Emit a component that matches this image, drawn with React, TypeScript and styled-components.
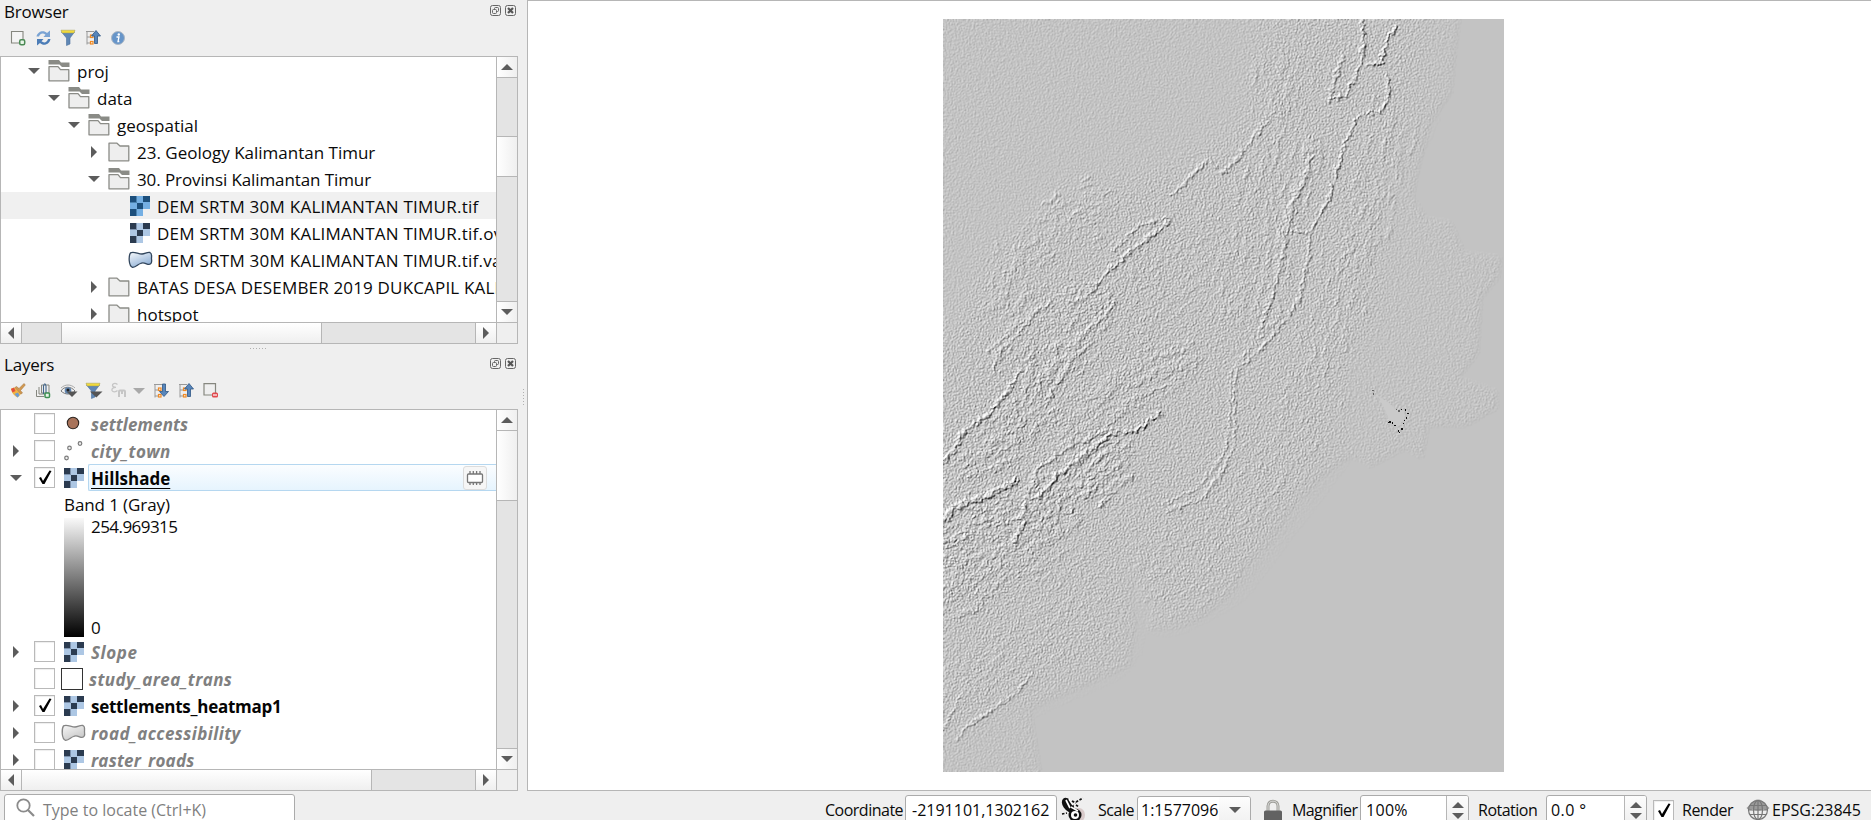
import React from "react";
import styled, { createGlobalStyle, css } from "styled-components";

const Global = createGlobalStyle`
  * { box-sizing: border-box; }
  html, body { margin: 0; padding: 0; overflow: hidden; }
  body { background: #efefef; color: #0a0a0a; font-family: "Open Sans", "Noto Sans", sans-serif; font-size: 17px; }
  svg { display: block; flex: none; }
`;

/* ---------- layout ---------- */
const Shell = styled.div`
  width: 1871px; height: 820px; display: flex; flex-direction: column;
  background: #efefef; overflow: hidden;
`;
const Main = styled.div`display: flex; height: 791px; flex: none;`;
const Docks = styled.div`width: 518px; display: flex; flex-direction: column; flex: none;`;
const VHandle = styled.div`
  width: 9px; flex: none; display: flex; align-items: flex-start; justify-content: center; padding: 389px 0 0 2px;
`;
const HHandle = styled.div`height: 9px; flex: none; display: flex; justify-content: center; padding-top: 4px;`;
const Dots = styled.div<{ $vertical?: boolean }>`
  ${(p) => p.$vertical
    ? css`width: 1px; height: 17px; background: repeating-linear-gradient(#b0b0b0 0 1px, transparent 1px 3px);`
    : css`width: 18px; height: 1px; background: repeating-linear-gradient(90deg, #b0b0b0 0 1px, transparent 1px 3px);`}
`;
const MapPanel = styled.div`
  flex: 1; background: #fff; border: 1px solid #b6b6b6; border-right: 0; padding: 18px 0 0 415px;
`;

const Text = styled.span<{ $ls?: number }>`
  white-space: pre; flex: none;
  letter-spacing: ${(p) => p.$ls ?? 0}px;
`;

const Dock = styled.section<{ $h: number }>`height: ${(p) => p.$h}px; display: flex; flex-direction: column; flex: none;`;
const TitleBar = styled.header<{ $h: number }>`
  height: ${(p) => p.$h}px; padding: 0 2px 0 4px; display: flex; align-items: center; justify-content: space-between; flex: none;
`;
const TitleButtons = styled.div`display: flex; gap: 4px; margin-top: -3px;`;
const Toolbar = styled.div<{ $h: number; $pb: number }>`
  height: ${(p) => p.$h}px; display: flex; align-items: center; padding: 0 0 ${(p) => p.$pb}px 10px; flex: none;
`;
const Tool = styled.div<{ $w?: number }>`width: ${(p) => p.$w ?? 25}px; height: 18px; flex: none;`;

const Frame = styled.div`
  flex: 1; min-height: 0; border: 1px solid #b6b6b6; background: #fff;
  display: grid; grid-template-columns: 495px 21px; grid-template-rows: 1fr 21px;
`;
const Tree = styled.div`overflow: hidden; min-height: 0;`;
const Corner = styled.div`background: #efefef; border-left: 1px solid #b6b6b6; border-top: 1px solid #b6b6b6;`;
const Bar = styled.div<{ $v?: boolean }>`
  display: flex; background: #e4e4e4; overflow: hidden;
  ${(p) => (p.$v ? css`flex-direction: column; border-left: 1px solid #b6b6b6;` : css`border-top: 1px solid #b6b6b6;`)}
`;
const Piece = styled.div<{ $v?: boolean; $len: number; $edge?: "start" | "end" | "both" }>`
  flex: none; display: flex; align-items: center; justify-content: center;
  background: linear-gradient(${(p) => (p.$v ? "90deg" : "180deg")}, #ffffff, #efefef);
  ${(p) => (p.$v ? css`height: ${p.$len}px;` : css`width: ${p.$len}px;`)}
  ${(p) => (p.$edge === "start" || p.$edge === "both") && (p.$v ? "border-top: 1px solid #b6b6b6;" : "border-left: 1px solid #b6b6b6;")}
  ${(p) => (p.$edge === "end" || p.$edge === "both") && (p.$v ? "border-bottom: 1px solid #b6b6b6;" : "border-right: 1px solid #b6b6b6;")}
`;
const Gap = styled.div<{ $len?: number }>`flex: ${(p) => (p.$len ? `0 0 ${p.$len}px` : "1 1 0")};`;

const Row = styled.div<{ $level: number; $selected?: boolean }>`
  height: 27px; display: flex; align-items: center; white-space: nowrap;
  padding-left: ${(p) => 27 + p.$level * 20}px;
  background: ${(p) => (p.$selected ? "#f0f0f0" : "transparent")};
  ${Text} { margin-top: 2px; }
`;
const ArrowSlot = styled.div`width: 20px; flex: none; display: flex;`;
const IconSlot = styled.div`width: 29px; flex: none; display: flex;`;
const RasterSlot = styled.div`padding-left: 2px;`;

const LayerRow = styled.div`height: 27px; display: flex; align-items: center; white-space: nowrap; padding-left: 9px;`;
const LayerArrow = styled.div`width: 24px; flex: none; display: flex;`;
const Check = styled.div`
  width: 21px; height: 21px; flex: none; background: #fff; border: 1px solid #b9b9b9;
  box-shadow: inset 1px 1px 1px #eee; display: flex; align-items: center; justify-content: center;
`;
const Symbol = styled.div<{ $w: number; $pl: number }>`width: ${(p) => p.$w}px; padding-left: ${(p) => p.$pl}px; flex: none; display: flex;`;
const Name = styled.div<{ $kind: "off" | "on" | "current" }>`
  flex: 1; height: 27px; display: flex; justify-content: space-between; align-items: center;
  padding-left: 2px; font-weight: 700; border: 1px solid transparent; border-right: 0;
  color: ${(p) => (p.$kind === "off" ? "#808080" : "#050505")};
  font-style: ${(p) => (p.$kind === "off" ? "italic" : "normal")};
  ${Text} { margin-top: 2px; }
  ${(p) => p.$kind === "current" && css`
    border-color: #b5d7f0; border-radius: 2px 0 0 2px; background: linear-gradient(#fbfdff, #e6f4fe);
    ${Text} { text-decoration: underline; text-decoration-thickness: 1px; text-underline-offset: 3px; }
  `}
`;
const MemoryChip = styled.div`
  width: 24px; height: 24px; margin-right: 9px; border: 1px solid #dcdcdc; border-radius: 3px; background: #f6f6f6;
  display: flex; align-items: center; justify-content: center;
`;
const BandRow = styled.div`height: 27px; padding-left: 63px; display: flex; align-items: center;`;
const RampRow = styled.div`height: 120px; padding: 0 0 1px 63px; display: flex;`;
const Ramp = styled.div`width: 20px; background: linear-gradient(#f9f9f9, #000);`;
const RampLabels = styled.div`
  padding-left: 7px; display: flex; flex-direction: column; justify-content: space-between; line-height: 18px;
`;

/* ---------- status bar ---------- */
const Status = styled.footer`height: 29px; flex: none; display: flex; align-items: flex-start; overflow: hidden; font-size: 16px;`;
const Cell = styled.div<{ $w: number }>`width: ${(p) => p.$w}px; height: 36px; flex: none; display: flex; align-items: center; padding-top: 1px;`;
const Glyph = styled.div<{ $w: number; $pt: number }>`width: ${(p) => p.$w}px; padding-top: ${(p) => p.$pt}px; flex: none;`;
const Field = styled.div<{ $w: number; $mt: number; $pl: number; $mr?: number }>`
  width: ${(p) => p.$w}px; margin: ${(p) => p.$mt}px ${(p) => p.$mr ?? 0}px 0 0; height: 40px; flex: none;
  background: #fff; border: 1px solid #ababab; border-radius: 3px; display: flex; align-items: flex-start;
  padding: ${(p) => 6 - p.$mt}px 0 0 ${(p) => p.$pl}px; line-height: 24px; overflow: hidden;
`;
const Search = styled(Field)`color: #7f7f7f; margin-left: 4px; gap: 7px;`;
const Stepper = styled.div<{ $pt: number; $line?: boolean; $w: number; $up?: number }>`
  margin: -${(p) => p.$up ?? 4}px 0 0 auto; width: ${(p) => p.$w}px; height: 40px; padding-top: ${(p) => p.$pt}px; flex: none;
  display: flex; flex-direction: column; align-items: center; gap: 5px;
  background: linear-gradient(#fdfdfd, #f0f0f0 28px); border-left: ${(p) => (p.$line ? "1px solid #b6b6b6" : "0")};
`;
const StatusCheck = styled(Check)`margin: 9px 8px 0 6px;`;

/* ---------- small icons ---------- */
const Tri = ({ dir }: { dir: "u" | "d" | "l" | "r" }) => {
  const d = { u: "M0 6 L6 0 L12 6Z", d: "M0 0 L12 0 L6 6Z", l: "M6 0 L6 12 L0 6Z", r: "M0 0 L6 6 L0 12Z" }[dir];
  const h = dir === "u" || dir === "d";
  return <svg width={h ? 12 : 6} height={h ? 6 : 12}><path d={d} fill="#5c5c5c" /></svg>;
};
const Collapsed = () => <svg width="9" height="12"><path d="M3 0L9 6L3 12Z" fill="#5c5c5c" /></svg>;
const Tick = () => (
  <svg width="16" height="17" viewBox="0 0 16 17"><path d="M2 9 L4 8 L6 12 L12.5 1.5 L14.5 2 L7.5 15 L5.5 15Z" fill="#000" /></svg>
);
const FloatBtn = () => (
  <svg width="11" height="11" viewBox="0 0 11 11" fill="none" stroke="#666">
    <rect x=".5" y=".5" width="10" height="10" rx="2" /><rect x="4.5" y="2.5" width="4" height="4" rx="1" /><rect x="2.5" y="4.5" width="4" height="4" rx="1" fill="#efefef" />
  </svg>
);
const CloseBtn = () => (
  <svg width="11" height="11" viewBox="0 0 11 11" fill="none" stroke="#666">
    <rect x=".5" y=".5" width="10" height="10" rx="2" /><path d="M3 3 L8 8 M8 3 L3 8" strokeWidth="2.2" stroke="#555" />
  </svg>
);
const Folder = () => (
  <svg width="22" height="20" viewBox="0 0 22 20"><path d="M1 1.2 H9 L12 4 H20.8 V18.8 H1Z" fill="#eee" stroke="#8b8c87" strokeWidth="1.3" strokeLinejoin="round" /></svg>
);
const FolderOpen = () => (
  <svg width="22" height="22" viewBox="0 0 22 22">
    <path d="M.5 0 H11 L13 2.5 H21.5 V7 H14 L11.5 4.5 H.5Z" fill="#8a8b86" />
    <path d="M1 6.7 H10 L12.5 9.7 H20.8 V20.8 H1Z" fill="#eee" stroke="#8b8c87" strokeWidth="1.3" strokeLinejoin="round" />
  </svg>
);
const Raster = ({ blue }: { blue?: boolean }) => {
  const d = blue ? "#1c4f7c" : "#2b3b50", l = blue ? "#74afe3" : "#adc7e4";
  return (
    <svg width="20" height="20" viewBox="0 0 20 20" shapeRendering="crispEdges">
      <path d="M0 0H20V13H13V20H0Z" fill={l} />
      <path d="M0 0H6V6H0Z M13 0H20V6H13Z M7 7H13V13H7Z M0 13H6V20H0Z" fill={d} />
      <path d="M6 0H7V6H6Z M6 13H7V20H6Z M0 6H7V7H0Z" fill={blue ? "#4b83b0" : "#7d92ad"} />
    </svg>
  );
};
const Vector = ({ gray }: { gray?: boolean }) => (
  <svg width="25" height="18" viewBox="0 0 25 18">
    <defs><linearGradient id={gray ? "vg" : "vb"} x1="0" y1="0" x2=".6" y2="1">
      <stop offset="0" stopColor={gray ? "#f8f8f8" : "#f8fafc"} /><stop offset="1" stopColor={gray ? "#c8c8c8" : "#8fb0d6"} />
    </linearGradient></defs>
    <path d="M2.500 1.800 C6 0 10 3 14 3 C17 3 19 .8 22 1.500 C24.500 2.500 23.300 6 23.500 8 C24 11 23.500 14 20 13.300 C17 12.500 15.500 11 12.500 12.500 C9.500 13.500 8 16.500 4.500 16.300 C.5 15 .5 5 2.500 1.800Z"
      fill={`url(#${gray ? "vg" : "vb"})`} stroke={gray ? "#858585" : "#31455c"} strokeWidth="1.3" />
  </svg>
);
const AddItem = () => (
  <svg width="18" height="18" viewBox="0 0 18 18" fill="none"><path d="M1.500 2.500H13V14H1.500Z" stroke="#86877f" strokeWidth="1.100" fill="#f4f4f4" /><rect x="9.700" y="10.700" width="5" height="5" rx="1.500" fill="#e8f4e8" stroke="#4b8a55" strokeWidth="1.500" /></svg>
);
const Refresh = () => (
  <svg width="18" height="18" viewBox="0 0 18 18">
    <path d="M1.500 7.500 C2.500 2.500 8.500 .5 12 4 L15 1.500 V8 H8.500 L10.500 5.700 C8 3.600 5 4.500 4 7.500Z" fill="#7aa3d3" />
    <path d="M15.500 10 C14.500 15.500 8.500 17.500 5 14 L2 16.500 V10 H8.500 L6.500 12.300 C9 14.400 12 13.500 13 10Z" fill="#4c7db7" />
  </svg>
);
const Funnel = ({ menu }: { menu?: boolean }) => (
  <svg width="18" height="18" viewBox="0 0 18 18">
    <path d="M1.500 3 H14.500 L10 9 V15 L6.500 16.500 V9Z" fill="#5f87b5" stroke="#49709d" strokeWidth=".6" />
    <path d="M1 1.200 H15 L14 4 H2Z" fill="#f0da3c" stroke="#a39b55" strokeWidth=".5" />
    {menu && <path d="M5 9.500H17.500L11.300 15.500Z" fill="#555" />}
  </svg>
);
const TreeArrow = ({ down }: { down?: boolean }) => (
  <svg width="18" height="18" viewBox="0 0 18 18" fill="none">
    <path d="M2 2.500V15.500 M1 2.500H9 M2 8H5 M2 14H5" stroke="#999" strokeWidth="1" />
    <rect x="5.500" y="6" width="2.500" height="2.500" stroke="#f08a24" strokeWidth="1.200" /><rect x="5.500" y="12.500" width="2.500" height="2.500" stroke="#f08a24" strokeWidth="1.200" />
    {down
      ? <path d="M9.500 2H12.500V9.500H15.500L11 14.500L6.500 9.500H9.500Z" fill="#5886bb" stroke="#2e5684" strokeWidth=".8" />
      : <path d="M9.500 14.500H12.500V7H15.500L11 1.500L6.500 7H9.500Z" fill="#5886bb" stroke="#2e5684" strokeWidth=".8" />}
  </svg>
);
const Info = () => (
  <svg width="18" height="18" viewBox="0 0 18 18"><circle cx="8" cy="9" r="6.500" fill="#6795c9" stroke="#aeb8c4" /><circle cx="8.800" cy="5.500" r="1.200" fill="#fff" /><path d="M6.500 8H9L8 12.500H9.300" stroke="#fff" strokeWidth="1.300" fill="none" /></svg>
);
const Brush = () => (
  <svg width="18" height="18" viewBox="0 0 18 18">
    <path d="M1 6.500L5 5.500L11 12L7.500 15.500C4 14 1.500 10.500 1 6.500Z" fill="#f2b441" /><path d="M1 7L4 5.500L5.500 9L2.500 10.500Z" fill="#e24e3d" /><path d="M4.500 12L8 10.500L9.500 13.500L7.500 15.500Z" fill="#6b9bd4" />
    <path d="M5 5.500L6.500 4.500L9 6.500L14 1.500L15.300 3L10.500 8.500L12.500 11L11 12Z" fill="#d39a50" stroke="#9b6a35" strokeWidth=".5" />
  </svg>
);
const AddGroup = () => (
  <svg width="18" height="18" viewBox="0 0 18 18" fill="none" stroke="#85867f" strokeWidth="1">
    <path d="M1.500 8V14.500H9 M4 5V12H10 M6.500 3H14V11H6.500Z" /><path d="M8.500 12V4Q10 -.5 11 4V11" stroke="#41658c" strokeWidth="1.100" /><rect x="10" y="11" width="4.500" height="4.500" rx="1" fill="#e8f4e8" stroke="#3f9153" strokeWidth="1.500" />
  </svg>
);
const Eye = () => (
  <svg width="18" height="18" viewBox="0 0 18 18"><path d="M1 9C4 4 11 4 15 9C11 13 5 13 1 9Z" fill="#f2f2f2" stroke="#777" /><path d="M1 6C5 2 11 2 15 6" stroke="#aaa" fill="none" /><circle cx="8" cy="8.500" r="3.300" fill="#5f83ad" /><circle cx="8" cy="8" r="1.500" fill="#222" /><path d="M6.500 9.500H17.500L12 15Z" fill="#555" /></svg>
);
const Expression = () => (
  <svg width="18" height="18" viewBox="0 0 18 18" fill="none" stroke="#c6c6c6" strokeWidth="1.300"><path d="M7.500 2.500C5 .5 2 1.500 2.500 3.800C3 5.300 4.500 5.300 6 5.300C3 5.300 1.500 6.800 2 8.500C3 10.500 6 10 7.500 8.500" /><path d="M9 15V9.500Q9 8.500 10 8.500H14Q15 8.500 15 9.500V15M12 9V12" strokeWidth="2" /></svg>
);
const RemoveItem = () => (
  <svg width="18" height="18" viewBox="0 0 18 18" fill="none"><path d="M1 1.700H12.500V13H1Z" stroke="#86877f" strokeWidth="1.200" /><rect x="9" y="10.500" width="6" height="5" rx="1.500" fill="#e2484d" /><path d="M10 13H14" stroke="#fff" strokeWidth="1.200" /></svg>
);
const Memory = () => (
  <svg width="18" height="16" viewBox="0 0 18 16" fill="none" stroke="#777" strokeWidth="1.300"><rect x="1.500" y="4" width="15" height="8.500" rx="1" fill="#fff" /><path d="M4 1V4M7.300 1V4M10.600 1V4M14 1V4M4 12.500V15M7.300 12.500V15M10.600 12.500V15M14 12.500V15" /></svg>
);
const Magnify = () => (
  <svg width="20" height="20" viewBox="0 0 20 20" fill="none" stroke="#8b8b8b" strokeWidth="1.800"><circle cx="7.500" cy="7.500" r="6.200" /><path d="M12 12L18 18" strokeWidth="2.200" /></svg>
);
const Extents = () => (
  <svg width="24" height="24" viewBox="0 0 24 24">
    <ellipse cx="18" cy="18" rx="6" ry="7" fill="#d8caca" /><ellipse cx="7" cy="8" rx="5" ry="8" transform="rotate(-35 7 8)" fill="#111" />
    <path d="M5 3L9 11M8 2L12 8" stroke="#fff" strokeWidth="1.700" /><circle cx="14" cy="18" r="6.500" fill="#111" /><circle cx="14" cy="18" r="4" fill="#fff" /><circle cx="14.500" cy="18" r="1.800" fill="#111" />
    <path d="M10 10L17 14" stroke="#fff" strokeWidth="1.500" /><path d="M11 4L15 6M15 5L22 1M1 17L6 16M15 8L18 10" stroke="#111" strokeWidth="1.700" strokeDasharray="2.500 1.500" />
  </svg>
);
const Lock = () => (
  <svg width="18" height="26" viewBox="0 0 18 26"><path d="M4 13V7C4 .5 14 .5 14 7V13" fill="none" stroke="#9d9d98" strokeWidth="3" /><path d="M4 13V7C4 .5 14 .5 14 7V13" fill="none" stroke="#e8e8e8" strokeWidth=".8" /><rect x="0" y="11.500" width="18" height="14" rx="1.500" fill="#626262" /></svg>
);
const Globe = () => (
  <svg width="24" height="22" viewBox="0 0 24 22" fill="none" stroke="#777" strokeWidth="1.200">
    <circle cx="12" cy="11" r="9.500" fill="#ededed" /><path d="M5 5C8 -1 16 -1 19 5L23.500 9C22 11 19 12 17 10C14 12 10 12 7 10C5 12 2 11 .5 9Z" fill="#777" stroke="none" opacity=".7" />
    <ellipse cx="12" cy="11" rx="4.500" ry="9.500" /><path d="M12 1.500V20.500M2.500 11H21.500M4 6.500H20M4 15.500H20" />
  </svg>
);

const ScrollV = ({ before, thumb, thumbFirst }: { before: number; thumb: number; thumbFirst?: boolean }) => (
  <Bar $v>
    <Piece $v $len={21} $edge="end"><Tri dir="u" /></Piece>
    {before > 0 && <Gap $len={before} />}
    <Piece $v $len={thumb} $edge={thumbFirst ? "end" : "both"} />
    <Gap />
    <Piece $v $len={21} $edge="start"><Tri dir="d" /></Piece>
  </Bar>
);
const ScrollH = ({ before, thumb, thumbFirst }: { before: number; thumb: number; thumbFirst?: boolean }) => (
  <Bar>
    <Piece $len={21} $edge="end"><Tri dir="l" /></Piece>
    {before > 0 && <Gap $len={before} />}
    <Piece $len={thumb} $edge={thumbFirst ? "end" : "both"} />
    <Gap />
    <Piece $len={21} $edge="start"><Tri dir="r" /></Piece>
  </Bar>
);

/* ---------- hillshade raster ---------- */
type Pt = [number, number];
const project = ([x, y]: Pt): Pt => [(x - 34) / 2.613, (y - 38) / 1.984];
const toPath = (pts: Pt[], close = false) =>
  pts.map((p, i) => { const [x, y] = project(p); return `${i ? "L" : "M"}${x.toFixed(1)} ${y.toFixed(1)}`; }).join("") + (close ? "Z" : "");

const land: Pt[] = [[20, 20], [1385, 20], [1370, 110], [1360, 185], [1310, 240], [1280, 320], [1260, 390], [1300, 435], [1360, 440], [1395, 500], [1440, 505], [1490, 510], [1485, 550], [1440, 590], [1430, 700], [1380, 750], [1480, 775], [1480, 810], [1400, 845], [1300, 845], [1285, 910], [1240, 890], [1150, 925], [1100, 905], [1020, 945], [950, 1000], [880, 1080], [820, 1120], [790, 1175], [700, 1230], [640, 1245], [570, 1248], [580, 1190], [548, 1195], [545, 1140], [500, 1105], [480, 1100], [520, 1150], [525, 1200], [535, 1230], [520, 1320], [400, 1360], [260, 1405], [290, 1545], [20, 1545]];
const hills: Pt[] = [[880, 20], [1290, 20], [1270, 240], [1200, 330], [1170, 480], [1160, 640], [1090, 700], [1060, 880], [990, 950], [860, 1080], [780, 1160], [600, 1230], [530, 1080], [490, 1300], [250, 1380], [20, 1480], [20, 700], [150, 520], [350, 380], [650, 330], [820, 260]];
const rugged: Pt[] = [[20, 870], [160, 740], [300, 590], [480, 500], [640, 430], [560, 640], [680, 700], [560, 860], [330, 1050], [200, 1180], [20, 1240]];

const ridges: { h: number; w: number; pts: Pt[] }[] = [
  { h: 0.7, w: 2.4, pts: [[1130, 40], [1133, 90], [1120, 140], [1090, 190], [1060, 195]] },
  { h: 0.7, w: 2.4, pts: [[1215, 55], [1190, 90], [1180, 125], [1140, 130]] },
  { h: 0.5, w: 2, pts: [[1080, 110], [1060, 150], [1045, 200]] },
  { h: 0.6, w: 1.8, pts: [[1195, 150], [1197, 195], [1180, 220], [1120, 230], [1095, 265], [1070, 320], [1050, 380], [1010, 440], [995, 460], [950, 460]] },
  { h: 0.55, w: 2, pts: [[1010, 290], [985, 350], [950, 400], [935, 460], [915, 530], [895, 590], [860, 660]] },
  { h: 0.5, w: 2, pts: [[995, 310], [965, 370], [930, 440], [920, 480]] },
  { h: 0.45, w: 1.6, pts: [[990, 460], [990, 500], [975, 570], [950, 615], [870, 690], [800, 735], [795, 790], [797, 885], [760, 940], [710, 990], [620, 1015]] },
  { h: 0.32, w: 1.6, pts: [[930, 610], [840, 690], [785, 740], [783, 850], [770, 900], [700, 970], [610, 1000]] },
  { h: 0.4, w: 2.4, pts: [[880, 240], [820, 300], [770, 345], [725, 318], [650, 375], [630, 390]] },
  { h: 0.6, w: 2.4, pts: [[628, 438], [560, 480], [485, 525], [450, 550], [410, 590], [360, 600]] },
  { h: 0.45, w: 2, pts: [[620, 432], [545, 450], [480, 495]] },
  { h: 0.5, w: 2.2, pts: [[485, 600], [440, 640], [400, 660], [370, 720], [320, 780], [300, 810]] },
  { h: 0.5, w: 2, pts: [[340, 595], [280, 615], [235, 660], [180, 700], [165, 740]] },
  { h: 0.4, w: 1.8, pts: [[300, 605], [240, 640], [150, 700]] },
  { h: 0.7, w: 3, pts: [[235, 735], [205, 775], [150, 825], [80, 860], [75, 880], [35, 920]] },
  { h: 0.8, w: 3.2, pts: [[600, 820], [540, 855], [490, 855], [440, 880], [330, 945], [300, 975], [250, 1000], [245, 1040], [220, 1075]] },
  { h: 0.5, w: 3, pts: [[480, 850], [380, 880], [280, 930], [250, 1000]] },
  { h: 0.8, w: 5, pts: [[225, 955], [150, 985], [80, 1000], [20, 1040]] },
  { h: 0.4, w: 1.8, pts: [[270, 1335], [220, 1380], [100, 1440], [70, 1465]] },
  { h: 0.35, w: 1.6, pts: [[35, 1450], [80, 1380]] },
  { h: 0.3, w: 1.8, pts: [[715, 710], [600, 740], [440, 775]] },
  { h: 0.3, w: 1.8, pts: [[690, 730], [610, 770], [500, 800]] },
];

/* Short ridgelets scattered along fold belts: count, half-width of the belt, length, height, axis. */
const belts: { n: number; spread: number; len: number; h: number; axis: Pt[] }[] = [
  { n: 240, spread: 85, len: 45, h: 0.42, axis: [[20, 1090], [180, 1040], [330, 1000], [520, 880]] },
  { n: 130, spread: 70, len: 60, h: 0.28, axis: [[20, 1190], [180, 1120], [330, 1060]] },
  { n: 200, spread: 75, len: 40, h: 0.36, axis: [[80, 930], [230, 850], [330, 720], [470, 600]] },
  { n: 130, spread: 60, len: 60, h: 0.25, axis: [[330, 860], [480, 780], [690, 700]] },
  { n: 110, spread: 70, len: 40, h: 0.2, axis: [[190, 620], [230, 500], [350, 440], [480, 400]] },
  { n: 90, spread: 55, len: 50, h: 0.22, axis: [[170, 720], [270, 620], [420, 580]] },
  { n: 190, spread: 90, len: 34, h: 0.18, axis: [[780, 640], [840, 480], [870, 320], [930, 120]] },
  { n: 200, spread: 85, len: 34, h: 0.18, axis: [[1000, 800], [1080, 560], [1160, 420], [1220, 220]] },
  { n: 90, spread: 45, len: 36, h: 0.26, axis: [[880, 640], [930, 450], [1010, 280]] },
  { n: 130, spread: 110, len: 40, h: 0.12, axis: [[560, 1160], [750, 1060], [900, 920], [1000, 800]] },
  { n: 120, spread: 100, len: 45, h: 0.11, axis: [[40, 1380], [200, 1280], [440, 1180]] },
  { n: 120, spread: 100, len: 34, h: 0.13, axis: [[520, 640], [640, 540], [760, 440]] },
];
let seed = 7;
const rnd = () => { seed = (seed * 16807) % 2147483647; return seed / 2147483647; };
const ridgelets = belts.flatMap((b) =>
  Array.from({ length: b.n }, () => {
    const i = Math.floor(rnd() * (b.axis.length - 1));
    const [x0, y0] = b.axis[i], [x1, y1] = b.axis[i + 1];
    const t = rnd(), a = Math.atan2(y1 - y0, x1 - x0) + (rnd() - 0.5) * 0.4;
    const s = (rnd() + rnd() - 1) * b.spread, L = b.len * (0.3 + rnd());
    const cx = x0 + (x1 - x0) * t - Math.sin(a) * s, cy = y0 + (y1 - y0) * t + Math.cos(a) * s;
    const dx = (Math.cos(a) * L) / 2, dy = (Math.sin(a) * L) / 2, k = (rnd() - 0.5) * 12;
    return { d: toPath([[cx - dx, cy - dy], [cx - dy * 0.2 + k, cy + k], [cx + dx, cy + dy]]), h: b.h * (0.4 + rnd()), w: 1 + rnd() * 1.6 };
  }));
const pits: Pt[] = [[1156, 774], [1158, 780], [1218, 812], [1224, 814], [1231, 812], [1240, 811], [1246, 820], [1243, 827], [1238, 833], [1200, 835], [1198, 838], [1206, 838], [1212, 843], [1222, 853], [1226, 857], [1230, 849], [1236, 839]];
const level = (v: number) => Math.round(Math.min(1, v) * 255);

const Hillshade = () => (
  <svg width="561" height="753" viewBox="0 0 561 753">
    <defs>
      <filter id="soft" x="-20%" y="-20%" width="140%" height="140%"><feGaussianBlur stdDeviation="14" /></filter>
      <filter id="edge" x="-5%" y="-5%" width="110%" height="110%"><feGaussianBlur stdDeviation="2.5" /></filter>
      {/* red drives the fine grain, green carries ridge height */}
      <filter id="shade" filterUnits="userSpaceOnUse" x="0" y="0" width="561" height="753" colorInterpolationFilters="sRGB">
        <feTurbulence type="fractalNoise" baseFrequency="0.73" numOctaves="2" seed="4" result="n" />
        <feColorMatrix in="n" values="0 0 0 0 0  0 0 0 0 0  0 0 0 0 0  2.6 0 0 0 -1" result="grain" />
        <feColorMatrix in="SourceGraphic" values="0 0 0 0 0  0 0 0 0 0  0 0 0 0 0  1 0 0 0 0" result="amp" />
        <feComposite in="grain" in2="amp" operator="arithmetic" k1="1" result="rough" />
        <feTurbulence type="fractalNoise" baseFrequency="0.2" numOctaves="3" seed="9" result="warp" />
        <feColorMatrix in="warp" values="0 0 0 0 0  0 0 0 0 0  0 0 0 0 0  0 0 3 0 -0.8" result="breaks" />
        <feColorMatrix in="SourceGraphic" values="0 0 0 0 0  0 0 0 0 0  0 0 0 0 0  0 1 0 0 0" result="rid0" />
        <feDisplacementMap in="rid0" in2="warp" scale="9" xChannelSelector="R" yChannelSelector="G" result="rid1" />
        <feComposite in="rid1" in2="breaks" operator="arithmetic" k1="0.7" k2="0.35" result="rid2" />
        <feGaussianBlur in="rid2" stdDeviation="0.4" result="rid" />
        <feComposite in="rough" in2="rid" operator="arithmetic" k2="1" k3="0.62" result="height" />
        <feDiffuseLighting in="height" surfaceScale="1.6" diffuseConstant="1" lightingColor="#fff">
          <feDistantLight azimuth="215" elevation="49.9" />
        </feDiffuseLighting>
      </filter>
    </defs>
    <rect width="561" height="753" fill="#c3c3c3" />
    <g filter="url(#shade)">
      <rect width="561" height="753" fill="#000" />
      <path d={toPath(land, true)} fill="rgb(26,0,0)" filter="url(#edge)" />
      <path d={toPath(hills, true)} fill="rgb(68,0,0)" filter="url(#soft)" />
      <path d={toPath(rugged, true)} fill="rgb(88,0,0)" filter="url(#soft)" />
      <g fill="none" strokeLinecap="round" strokeLinejoin="round" style={{ mixBlendMode: "screen" }}>
        {ridgelets.map((r, i) => <path key={i} d={r.d} stroke={`rgb(0,${level(r.h)},0)`} strokeWidth={r.w} />)}
        {ridges.map((r, i) => <path key={i} d={toPath(r.pts)} stroke={`rgb(0,${level(r.h)},0)`} strokeWidth={r.w} />)}
      </g>
    </g>
    <path d={toPath([[1170, 785], [1200, 800], [1215, 812], [1238, 815], [1240, 830], [1222, 848], [1200, 835], [1190, 815]], true)} fill="#cacaca" />
    {pits.map((p, i) => { const [x, y] = project(p); return <rect key={i} x={Math.round(x)} y={Math.round(y)} width={i % 3 ? 1 : 2} height={i % 2 ? 2 : 1} fill={i < 4 ? "#666" : "#111"} />; })}
  </svg>
);

/* ---------- data ---------- */
type Node = { level: number; icon: "open" | "closed" | "blue" | "raster" | "vector"; text: string; ls?: number; selected?: boolean };
const nodes: Node[] = [
  { level: 0, icon: "open", text: "proj" },
  { level: 1, icon: "open", text: "data" },
  { level: 2, icon: "open", text: "geospatial" },
  { level: 3, icon: "closed", text: "23. Geology Kalimantan Timur" },
  { level: 3, icon: "open", text: "30. Provinsi Kalimantan Timur", ls: -0.1 },
  { level: 4, icon: "blue", text: "DEM SRTM 30M KALIMANTAN TIMUR.tif", ls: 0.25, selected: true },
  { level: 4, icon: "raster", text: "DEM SRTM 30M KALIMANTAN TIMUR.tif.ovr", ls: 0.25 },
  { level: 4, icon: "vector", text: "DEM SRTM 30M KALIMANTAN TIMUR.tif.vat.dbf", ls: 0.25 },
  { level: 3, icon: "closed", text: "BATAS DESA DESEMBER 2019 DUKCAPIL KALIMANTAN TIMUR", ls: 0.17 },
  { level: 3, icon: "closed", text: "hotspot" },
];
const BrowserRow = ({ n }: { n: Node }) => (
  <Row $level={n.level} $selected={n.selected}>
    <ArrowSlot>{n.icon === "open" ? <Tri dir="d" /> : n.icon === "closed" ? <Collapsed /> : null}</ArrowSlot>
    <IconSlot>
      {n.icon === "open" && <FolderOpen />}
      {n.icon === "closed" && <Folder />}
      {n.icon === "blue" && <RasterSlot><Raster blue /></RasterSlot>}
      {n.icon === "raster" && <RasterSlot><Raster /></RasterSlot>}
      {n.icon === "vector" && <Vector />}
    </IconSlot>
    <Text $ls={n.ls}>{n.text}</Text>
  </Row>
);

type Layer = { arrow?: "r" | "d"; on?: boolean; current?: boolean; sym: "dot" | "dots" | "raster" | "poly" | "vector"; name: string; ls?: number };
const top: Layer[] = [
  { sym: "dot", name: "settlements", ls: 0.1 },
  { arrow: "r", sym: "dots", name: "city_town", ls: 0.35 },
  { arrow: "d", on: true, current: true, sym: "raster", name: "Hillshade" },
];
const rest: Layer[] = [
  { arrow: "r", sym: "raster", name: "Slope", ls: 0.6 },
  { sym: "poly", name: "study_area_trans", ls: 0.38 },
  { arrow: "r", on: true, sym: "raster", name: "settlements_heatmap1", ls: -0.25 },
  { arrow: "r", sym: "vector", name: "road_accessibility", ls: 0.42 },
  { arrow: "r", sym: "raster", name: "raster_roads", ls: 0.2 },
];
const LayerItem = ({ l }: { l: Layer }) => (
  <LayerRow>
    <LayerArrow>{l.arrow === "d" ? <Tri dir="d" /> : l.arrow === "r" ? <Collapsed /> : null}</LayerArrow>
    <Check>{l.on && <Tick />}</Check>
    <Symbol $w={l.sym === "poly" ? 31 : 33} $pl={l.sym === "poly" || l.sym === "vector" ? 6 : 9}>
      {l.sym === "raster" && <Raster />}
      {l.sym === "vector" && <Vector gray />}
      {l.sym === "poly" && <svg width="22" height="22"><rect x=".5" y=".5" width="21" height="21" fill="#fff" stroke="#333" /></svg>}
      {l.sym === "dot" && <svg width="20" height="20"><circle cx="9" cy="9" r="5.700" fill="#a8735a" stroke="#2e2520" strokeWidth="1.100" /></svg>}
      {l.sym === "dots" && <svg width="20" height="22" fill="#eee" stroke="#7a7a7a" strokeWidth="1.200"><circle cx="16" cy="3.500" r="1.800" /><circle cx="5.500" cy="8" r="1.800" /><circle cx="2.500" cy="18" r="1.800" /></svg>}
    </Symbol>
    <Name $kind={l.current ? "current" : l.on ? "on" : "off"}>
      <Text $ls={l.ls}>{l.name}</Text>
      {l.current && <MemoryChip><Memory /></MemoryChip>}
    </Name>
  </LayerRow>
);

export default function App() {
  return (
    <Shell>
      <Global />
      <Main>
        <Docks>
          <Dock $h={344}>
            <TitleBar $h={23}><Text $ls={-0.2}>Browser</Text><TitleButtons><FloatBtn /><CloseBtn /></TitleButtons></TitleBar>
            <Toolbar $h={33} $pb={3}>
              <Tool><AddItem /></Tool><Tool><Refresh /></Tool><Tool><Funnel /></Tool><Tool><TreeArrow /></Tool><Tool><Info /></Tool>
            </Toolbar>
            <Frame>
              <Tree>{nodes.map((n) => <BrowserRow key={n.text} n={n} />)}</Tree>
              <ScrollV before={58} thumb={41} />
              <ScrollH before={39} thumb={261} />
              <Corner />
            </Frame>
          </Dock>
          <HHandle><Dots /></HHandle>
          <Dock $h={438}>
            <TitleBar $h={23}><Text $ls={-0.2}>Layers</Text><TitleButtons><FloatBtn /><CloseBtn /></TitleButtons></TitleBar>
            <Toolbar $h={33} $pb={3}>
              <Tool><Brush /></Tool><Tool><AddGroup /></Tool><Tool><Eye /></Tool><Tool><Funnel menu /></Tool><Tool $w={23}><Expression /></Tool>
              <Tool $w={20}><svg width="12" height="18"><path d="M0 6H12L6 12Z" fill="#a9a9a9" /></svg></Tool>
              <Tool><TreeArrow down /></Tool><Tool><TreeArrow /></Tool><Tool><RemoveItem /></Tool>
            </Toolbar>
            <Frame>
              <Tree>
                {top.map((l) => <LayerItem key={l.name} l={l} />)}
                <BandRow><Text $ls={-0.1}>Band 1 (Gray)</Text></BandRow>
                <RampRow><Ramp /><RampLabels><Text $ls={-0.55}>254.969315</Text><Text>0</Text></RampLabels></RampRow>
                {rest.map((l) => <LayerItem key={l.name} l={l} />)}
              </Tree>
              <ScrollV before={0} thumb={70} thumbFirst />
              <ScrollH before={0} thumb={350} thumbFirst />
              <Corner />
            </Frame>
          </Dock>
        </Docks>
        <VHandle><Dots $vertical /></VHandle>
        <MapPanel><Hillshade /></MapPanel>
      </Main>
      <Status>
        <Search $w={291} $mt={3} $pl={11} $mr={530}><Magnify /><Text>Type to locate (Ctrl+K)</Text></Search>
        <Cell $w={80}><Text $ls={-0.5}>Coordinate</Text></Cell>
        <Field $w={152} $mt={4} $pl={6} $mr={4}><Text>-2191101,1302162</Text></Field>
        <Glyph $w={37} $pt={6}><Extents /></Glyph>
        <Cell $w={39}><Text $ls={-0.45}>Scale</Text></Cell>
        <Field $w={114} $mt={5} $pl={3} $mr={13}><Text>1:1577096</Text><Stepper $w={31} $pt={10} $up={1}><Tri dir="d" /></Stepper></Field>
        <Glyph $w={28} $pt={8}><Lock /></Glyph>
        <Cell $w={68}><Text $ls={-0.6}>Magnifier</Text></Cell>
        <Field $w={109} $mt={4} $pl={5} $mr={9}><Text $ls={0.3}>100%</Text><Stepper $line $w={22} $pt={8}><Tri dir="u" /><Tri dir="d" /></Stepper></Field>
        <Cell $w={68}><Text $ls={-0.5}>Rotation</Text></Cell>
        <Field $w={101} $mt={4} $pl={4}><Text $ls={0.4}>0.0 °</Text><Stepper $line $w={22} $pt={8}><Tri dir="u" /><Tri dir="d" /></Stepper></Field>
        <StatusCheck><Tick /></StatusCheck>
        <Cell $w={64}><Text $ls={-0.5}>Render</Text></Cell>
        <Glyph $w={26} $pt={8}><Globe /></Glyph>
        <Cell $w={98}><Text>EPSG:23845</Text></Cell>
      </Status>
    </Shell>
  );
}
